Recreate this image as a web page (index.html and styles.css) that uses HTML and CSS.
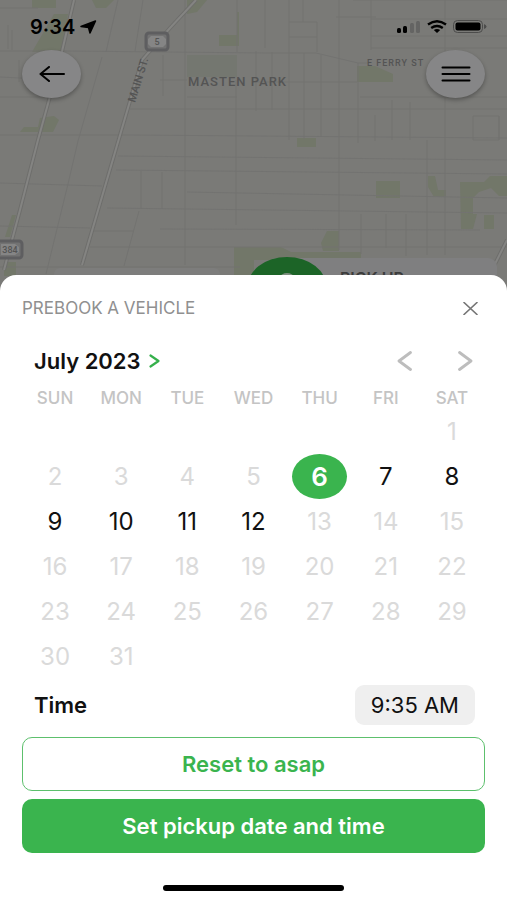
FILE: index.html
```html
<!DOCTYPE html>
<html lang="en">
<head>
<meta charset="utf-8">
<meta name="viewport" content="width=device-width, initial-scale=1">
<title>Prebook a vehicle</title>
<link rel="stylesheet" href="styles.css">
</head>
<body>
<div class="screen">
  <svg class="map" viewBox="0 0 507 300" preserveAspectRatio="xMidYMin slice" aria-hidden="true">
    <rect width="507" height="300" fill="#7a7a77"/>
    <g fill="#727769">
      <path d="M32 0h24v8H32zM92 0h22l-8 8h-10zM54 14h14l-6 38H32zM187 0h20l-10 12-10 2zM219 35h18V12h2v34h-20zM40 118l14-2 5 4-6 12H20l4-5h14zM12 215h4l-6 22H5zM4 262h12v14H4zM234 247h20v28h-20z"/>
      <path d="M187 55h50v22h-50z" fill="#747770"/>
      <path d="M357 66h18l18 8v8h-36zM297 138h19v9h-19zM376 181h24v17h-24zM428 176h7l3 14h8v7h-12l-6-10zM460 182h24l6-6h17v20h-8l-8-8-12 4-6 6v16h4l-4 15h-12zM484 215h10v14h-10zM327 231h12v20h-16l-2-8zM253 247h28l10 5h70v8H253z"/>
    </g>
    <g fill="none" stroke="#737371" stroke-width="1">
      <path d="M0 51h66l200 2h50l42 10h10M0 77l60 3M0 8h38M0 97h48M130 109h377M130 135l377 3M0 135h130M118 156l389 4M116 170l391 4M0 183l102 3M187 192l320 6M107 208l400 5M0 226l90 2M92 231h42M160 229l320 1M90 247h420M0 267h240M371 19h136M371 36h136M371 48h136M336 17h40M289 22h28M289 37h28M353 0h154M160 80h27M187 97h50M253 82h104M360 97h147"/>
      <path d="M118 0l-12 52M102 57l-24 84-10 43-22 90M143 0l-8 51M163 55v41M185 0v265M237 0v52M236 80v145M141 171v38M162 172v37M139 211l-15 55M339 0v250M371 0v50M289 0v140M303 0v22M317 22v30M256 51v60M272 52v58M304 53v86M321 55v82M358 63v80M445 0v255M427 140v115M375 115v26M392 100v40M410 102v38M473 116h26v24h-26zM361 214v40M386 214v34M406 214v42M499 116v24M265 0v48M12 30v20M8 25v24M19 60v22"/>
    </g>
    <g fill="none" stroke="#6e6e6c" stroke-width="4">
      <path d="M74 0L60 60 38 140 20 210 4 270M196 0l-26 28-28 32-60 205M507 240l-20 40"/>
    </g>
    <g fill="none" stroke="#848482" stroke-width="2">
      <path d="M74 0L60 60 38 140 20 210 4 270M196 0l-26 28-28 32-60 205M507 240l-20 40"/>
    </g>
    <g fill="#727272" stroke="#5e5e60" stroke-width="3">
      <rect x="146" y="33" width="22" height="17" rx="3"/>
      <rect x="-4" y="241" width="26" height="17" rx="3"/>
    </g>
    <path d="M151 36h12l3 3v5l-3 3h-12l-3-3v-5zM1 244h14l4 3v5l-4 3H1z" fill="#858585"/>
    <g class="map-label">
      <text x="157" y="45" font-size="9" text-anchor="middle">5</text>
      <text x="10" y="253" font-size="9" text-anchor="middle">384</text>
      <text x="188" y="86" font-size="13" letter-spacing="1">MASTEN PARK</text>
      <text x="367" y="66" font-size="9" letter-spacing="1">E FERRY ST</text>
      <text transform="translate(135 103) rotate(-73)" font-size="11">MAIN ST.</text>
    </g>
    <rect x="54" y="268" width="166" height="30" rx="6" fill="#7d7d7c"/>
    <rect x="267" y="258" width="230" height="50" rx="9" fill="#7f7f80"/>
    <ellipse cx="287" cy="288" rx="40" ry="31" fill="#1c6427"/>
    <ellipse cx="287" cy="278" rx="7" ry="5" fill="#7f8f80"/>
    <text x="340" y="284" class="pickup" font-size="16">PICK UP</text>
  </svg>

  <header class="top">
    <div class="status">
      <div class="clock">
        <span>9:34</span>
        <svg width="17" height="14" viewBox="0 0 17 14" aria-hidden="true"><path d="M15.500 1L10 13 8.500 7.500 1 6.500z" fill="#000" stroke="#000" stroke-width="1.500" stroke-linejoin="round"/></svg>
      </div>
      <div class="signals">
        <svg width="24" height="13" viewBox="0 0 24 13" aria-hidden="true"><rect x="0" y="8" width="4" height="5" rx="1.500"/><rect x="6" y="6" width="4" height="7" rx="1.500"/><g fill="#646463"><rect x="13" y="3" width="4" height="10" rx="1.500"/><rect x="19" y="1" width="4" height="12" rx="1.500"/></g></svg>
        <svg width="20" height="13" viewBox="0 0 20 13" aria-hidden="true"><g fill="none" stroke="#000" stroke-width="2.400"><path d="M1 4.500Q10-2 19 4.500M4.200 8Q10 3.800 15.800 8"/></g><path d="M6.800 10Q10 7.800 13.200 10L10 13z"/></svg>
        <svg width="34" height="13" viewBox="0 0 34 13" aria-hidden="true"><rect x="0.500" y="0.500" width="29" height="12" rx="4" fill="none" stroke="#4c4c4b"/><rect x="2.500" y="2.500" width="25" height="8" rx="2"/><path d="M31 4q2.500 1 2.500 2.500T31 9z" fill="#4c4c4b"/></svg>
      </div>
    </div>
    <nav class="nav">
      <button class="round" type="button" aria-label="Back">
        <svg width="26" height="16" viewBox="0 0 26 16" aria-hidden="true"><path d="M25 8H2M10 1L1.500 8l8.500 7" fill="none" stroke="#000" stroke-width="2" stroke-linecap="round" stroke-linejoin="round"/></svg>
      </button>
      <button class="round" type="button" aria-label="Menu">
        <svg width="30" height="16" viewBox="0 0 30 16" aria-hidden="true"><path d="M1.500 1.500h27M1.500 8h27M1.500 14.500h27" stroke="#000" stroke-width="2" stroke-linecap="round"/></svg>
      </button>
    </nav>
  </header>

  <main class="sheet">
    <div class="sheet-head">
      <h1 class="sheet-title">PREBOOK A VEHICLE</h1>
      <button class="bare" type="button" aria-label="Close">
        <svg width="15" height="13" viewBox="0 0 15 13" aria-hidden="true"><path d="M1 0.500l13 12M14 0.500l-13 12" stroke="#757575" stroke-width="1.600" stroke-linecap="round"/></svg>
      </button>
    </div>

    <div class="month-row">
      <button class="bare month" type="button">
        <span>July 2023</span>
        <svg width="11" height="14" viewBox="0 0 11 14" aria-hidden="true"><path d="M1.500 1.500L9.500 7l-8 5.500" fill="none" stroke="#35b04b" stroke-width="2.200" stroke-linecap="round" stroke-linejoin="round"/></svg>
      </button>
      <div class="arrows">
        <button class="bare" type="button" aria-label="Previous month">
          <svg width="15" height="20" viewBox="0 0 15 20" aria-hidden="true"><path d="M13.500 1.500L2 10l11.500 8.500" fill="none" stroke="#bdbdbd" stroke-width="2.800" stroke-linecap="round" stroke-linejoin="round"/></svg>
        </button>
        <button class="bare" type="button" aria-label="Next month">
          <svg width="15" height="20" viewBox="0 0 15 20" aria-hidden="true"><path d="M1.500 1.500L13 10 1.500 18.500" fill="none" stroke="#bdbdbd" stroke-width="2.800" stroke-linecap="round" stroke-linejoin="round"/></svg>
        </button>
      </div>
    </div>

    <table class="calendar">
      <thead>
        <tr><th scope="col">SUN</th><th scope="col">MON</th><th scope="col">TUE</th><th scope="col">WED</th><th scope="col">THU</th><th scope="col">FRI</th><th scope="col">SAT</th></tr>
      </thead>
      <tbody>
        <tr><td></td><td></td><td></td><td></td><td></td><td></td><td><button class="day" type="button" disabled>1</button></td></tr>
        <tr><td><button class="day" type="button" disabled>2</button></td><td><button class="day" type="button" disabled>3</button></td><td><button class="day" type="button" disabled>4</button></td><td><button class="day" type="button" disabled>5</button></td><td><button class="day selected" type="button" aria-pressed="true">6</button></td><td><button class="day" type="button">7</button></td><td><button class="day" type="button">8</button></td></tr>
        <tr><td><button class="day" type="button">9</button></td><td><button class="day" type="button">10</button></td><td><button class="day" type="button">11</button></td><td><button class="day" type="button">12</button></td><td><button class="day" type="button" disabled>13</button></td><td><button class="day" type="button" disabled>14</button></td><td><button class="day" type="button" disabled>15</button></td></tr>
        <tr><td><button class="day" type="button" disabled>16</button></td><td><button class="day" type="button" disabled>17</button></td><td><button class="day" type="button" disabled>18</button></td><td><button class="day" type="button" disabled>19</button></td><td><button class="day" type="button" disabled>20</button></td><td><button class="day" type="button" disabled>21</button></td><td><button class="day" type="button" disabled>22</button></td></tr>
        <tr><td><button class="day" type="button" disabled>23</button></td><td><button class="day" type="button" disabled>24</button></td><td><button class="day" type="button" disabled>25</button></td><td><button class="day" type="button" disabled>26</button></td><td><button class="day" type="button" disabled>27</button></td><td><button class="day" type="button" disabled>28</button></td><td><button class="day" type="button" disabled>29</button></td></tr>
        <tr><td><button class="day" type="button" disabled>30</button></td><td><button class="day" type="button" disabled>31</button></td><td></td><td></td><td></td><td></td><td></td></tr>
      </tbody>
    </table>

    <div class="time-row">
      <span class="time-label" id="time-label">Time</span>
      <button class="time-value" type="button" id="time-value" aria-labelledby="time-label time-value">9:35 AM</button>
    </div>

    <div class="actions">
      <button class="action outline" type="button">Reset to asap</button>
      <button class="action filled" type="button">Set pickup date and time</button>
    </div>
    <div class="home-bar"></div>
  </main>
</div>
</body>
</html>
```
FILE: styles.css
```css
* {
  box-sizing: border-box;
}

body {
  margin: 0;
  font-family: Inter, "Liberation Sans", sans-serif;
  color: #111;
  background: #7a7a77;
}

button {
  font: inherit;
  color: inherit;
  border: 0;
  padding: 0;
  background: none;
}

svg {
  display: block;
  flex: none;
}

.screen {
  position: relative;
  min-height: 100vh;
  display: flex;
  flex-direction: column;
  overflow: hidden;
}

.map {
  position: absolute;
  top: 0;
  left: 0;
  width: 100%;
  height: 300px;
}

.map-label {
  fill: #545454;
  font-family: Roboto, sans-serif;
  font-weight: 500;
}

.pickup {
  fill: #3c3c3c;
  font-weight: 600;
}

.top {
  position: relative;
  flex: 1;
  padding: 15px 22px 0;
}

.status {
  display: flex;
  justify-content: space-between;
  align-items: center;
  height: 23px;
  padding-left: 8px;
}

.clock,
.signals {
  display: flex;
  align-items: center;
}

.clock {
  gap: 5px;
  font-size: 20px;
  font-weight: 600;
  color: #000;
}

.signals {
  gap: 6px;
  margin-right: -2px;
}

.nav {
  display: flex;
  justify-content: space-between;
  margin-top: 12px;
}

.round {
  display: grid;
  place-items: center;
  width: 59px;
  height: 48px;
  border-radius: 50%;
  background: #868687;
  box-shadow: 0 2px 4px rgba(0, 0, 0, 0.3);
}

.sheet {
  position: relative;
  padding: 0 22px 9px;
  border-radius: 16px 16px 0 0;
  background: #fff;
}

.sheet-head {
  display: flex;
  justify-content: space-between;
  align-items: center;
  height: 66px;
  padding-right: 7px;
}

.sheet-title {
  margin: 0;
  font-size: 17px;
  font-weight: 400;
  color: #909090;
}

.month-row {
  display: flex;
  justify-content: space-between;
  align-items: center;
  height: 40px;
  padding: 0 12px;
}

.month {
  display: flex;
  align-items: center;
  gap: 8px;
  font-size: 22px;
  font-weight: 600;
}

.arrows {
  display: flex;
  gap: 46px;
}

.calendar {
  width: 100%;
  table-layout: fixed;
  border-collapse: collapse;
}

.calendar th {
  height: 28px;
  padding: 0;
  vertical-align: bottom;
  font-size: 17px;
  line-height: 22px;
  font-weight: 500;
  color: #c4c4c4;
}

.calendar td {
  height: 45px;
  padding: 0;
}

.day {
  display: block;
  width: 55px;
  height: 45px;
  margin: 0 auto;
  border-radius: 50%;
  font-size: 24px;
  color: #111;
}

.day:disabled {
  color: #dadada;
}

.day.selected {
  font-size: 26px;
  font-weight: 600;
  color: #fff;
  background: #3ab44e;
}

.time-row {
  display: flex;
  justify-content: space-between;
  align-items: center;
  height: 52px;
  padding: 0 10px 0 12px;
  font-size: 22px;
}

.time-label {
  font-weight: 600;
}

.time-value {
  height: 40px;
  padding: 0 16px;
  border-radius: 9px;
  background: #efefef;
}

.actions {
  display: grid;
  gap: 8px;
  margin-top: 6px;
}

.action {
  height: 54px;
  border-radius: 10px;
  font-size: 22px;
  font-weight: 600;
}

.outline {
  border: 1px solid #5dc06d;
  color: #3ab44e;
}

.filled {
  color: #fff;
  background: #3ab44e;
}

.home-bar {
  width: 39%;
  height: 6px;
  margin: 32px auto 0;
  border-radius: 3px;
  background: #000;
}
```
